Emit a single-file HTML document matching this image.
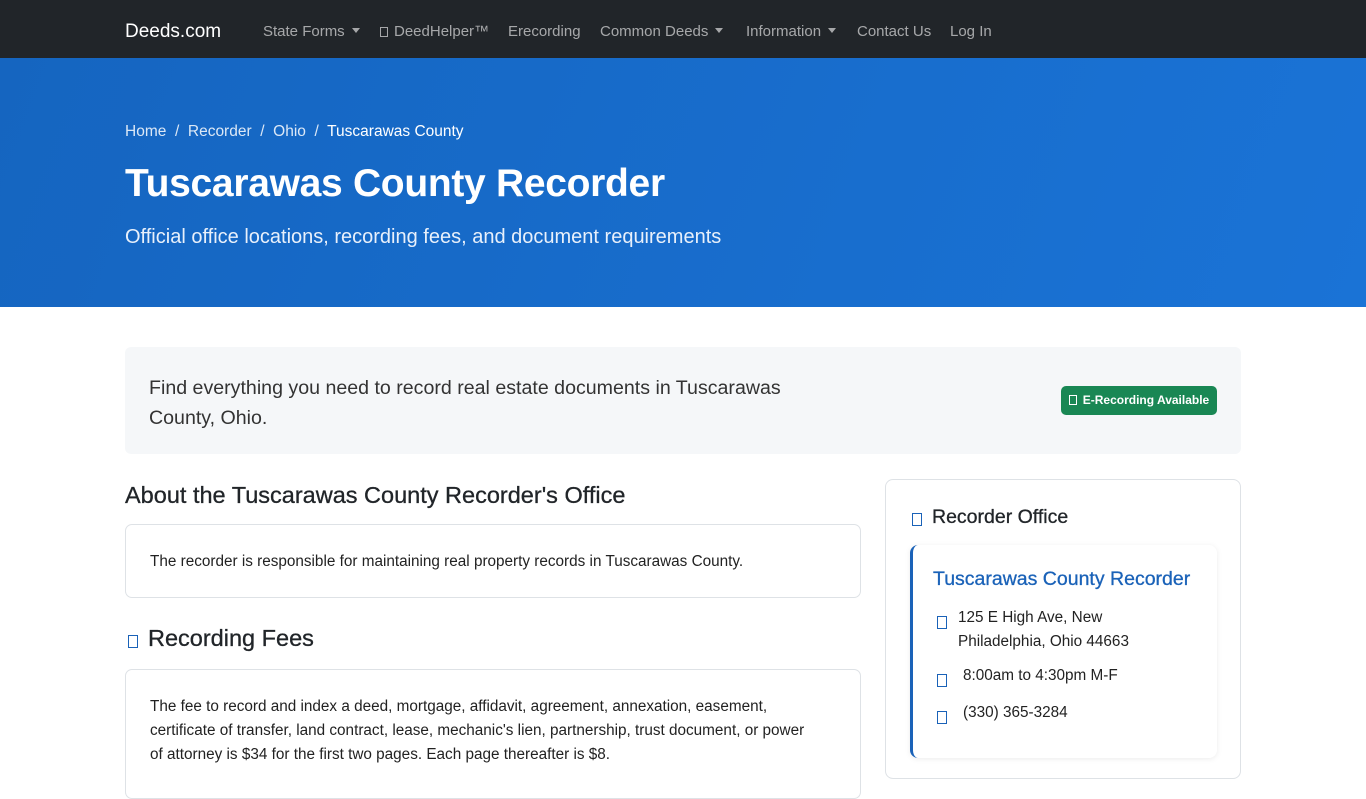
<!DOCTYPE html>
<html><head><meta charset="utf-8">
<style>
*{box-sizing:border-box;margin:0;padding:0}
body{width:1366px;height:768px;overflow:hidden;font-family:"Liberation Sans",sans-serif;color:#212529;background:#fff}
.nav{height:58px;background:#212529;position:relative}
.nav span{position:absolute;top:23px;font-size:15px;color:rgba(255,255,255,.6);white-space:nowrap}
.nav span.brand{left:125px;top:21px;color:#fff;font-size:19px}
.caret::after{content:"";display:inline-block;margin-left:7px;vertical-align:3px;border-top:5px solid;border-left:4px solid transparent;border-right:4px solid transparent}
.hero{position:absolute;top:58px;left:0;width:1366px;height:249px;background:linear-gradient(110deg,#1565c0,#1a73d6)}
.bc{position:absolute;left:125px;font-size:15.5px;color:rgba(255,255,255,.85)}
.bc b{font-weight:normal;color:#fff}
.h1{position:absolute;left:125px;font-size:39px;font-weight:bold;color:#fff;letter-spacing:-.3px}
.sub{position:absolute;left:125px;font-size:20px;color:#e8f0fb}
.info{position:absolute;left:125px;top:347px;width:1116px;height:107px;background:#f5f7f9;border-radius:6px}
.info p{position:absolute;left:24px;top:26px;font-size:19.6px;line-height:30px;color:#333;white-space:nowrap}
.badge{position:absolute;left:936px;top:39px;width:156px;height:29px;background:#198754;border-radius:5px;color:#fff;font-size:12px;font-weight:bold;line-height:29px;text-align:center}
.ic{display:inline-block;width:8px;height:10px;border:1px solid currentColor;vertical-align:-1px;margin-right:6px}
.icb{display:inline-block;width:10px;height:13px;border:1px solid #1a62b8;}
.h2{position:absolute;left:125px;top:482px;font-size:23.5px;-webkit-text-stroke:.3px #212529}
.card{position:absolute;border:1px solid #dee2e6;border-radius:7px;background:#fff}
.t{font-size:15.3px;line-height:24px;color:#222;white-space:nowrap}
.rc{position:absolute;left:885px;top:479px;width:356px;height:300px;border:1px solid #dee2e6;border-radius:8px}
.inner{position:absolute;left:910px;top:545px;width:307px;height:213px;border-left:3px solid #1a62b8;border-radius:8px;box-shadow:0 1px 6px rgba(0,0,0,.08);background:#fff}
</style></head><body>
<div class="nav">
<span class="brand">Deeds.com</span>
<span style="left:263px" class="caret">State Forms</span>
<span style="left:380px"><i class="ic"></i>DeedHelper™</span>
<span style="left:508px">Erecording</span>
<span style="left:600px" class="caret">Common Deeds</span>
<span style="left:746px" class="caret">Information</span>
<span style="left:857px">Contact Us</span>
<span style="left:950px">Log In</span>
</div>
<div class="hero">
<div class="bc" style="top:65px">Home &nbsp;/&nbsp; Recorder &nbsp;/&nbsp; Ohio &nbsp;/&nbsp; <b>Tuscarawas County</b></div>
<div class="h1" style="top:104px">Tuscarawas County Recorder</div>
<div class="sub" style="top:168px">Official office locations, recording fees, and document requirements</div>
</div>
<div class="info"><p>Find everything you need to record real estate documents in Tuscarawas<br>County, Ohio.</p><div class="badge"><i class="ic"></i>E-Recording Available</div></div>
<div class="h2">About the Tuscarawas County Recorder's Office</div>
<div class="card" style="left:125px;top:524px;width:736px;height:74px"><div class="t" style="position:absolute;left:24px;top:25px">The recorder is responsible for maintaining real property records in Tuscarawas County.</div></div>
<div class="h2" style="top:625px;left:128px"><i class="icb" style="vertical-align:-2px;margin-right:10px"></i>Recording Fees</div>
<div class="card" style="left:125px;top:669px;width:736px;height:130px"><div class="t" style="position:absolute;left:24px;top:25px">The fee to record and index a deed, mortgage, affidavit, agreement, annexation, easement,<br>certificate of transfer, land contract, lease, mechanic's lien, partnership, trust document, or power<br>of attorney is $34 for the first two pages. Each page thereafter is $8.</div></div>
<div class="rc"></div>
<div style="position:absolute;left:912px;top:506px;font-size:19.5px;-webkit-text-stroke:.3px #212529"><i class="icb" style="vertical-align:-3px;margin-right:10px"></i>Recorder Office</div>
<div class="inner">
<div style="position:absolute;left:20px;top:23px;font-size:19.5px;color:#1a62b8;white-space:nowrap;-webkit-text-stroke:.3px #1a62b8">Tuscarawas County Recorder</div>
<i class="icb" style="position:absolute;left:24px;top:71px"></i>
<div class="t" style="position:absolute;left:45px;top:61px">125 E High Ave, New<br>Philadelphia, Ohio 44663</div>
<i class="icb" style="position:absolute;left:24px;top:129px"></i>
<div class="t" style="position:absolute;left:50px;top:119px">8:00am to 4:30pm M-F</div>
<i class="icb" style="position:absolute;left:24px;top:166px"></i>
<div class="t" style="position:absolute;left:50px;top:156px">(330) 365-3284</div>
</div>
</body></html>
